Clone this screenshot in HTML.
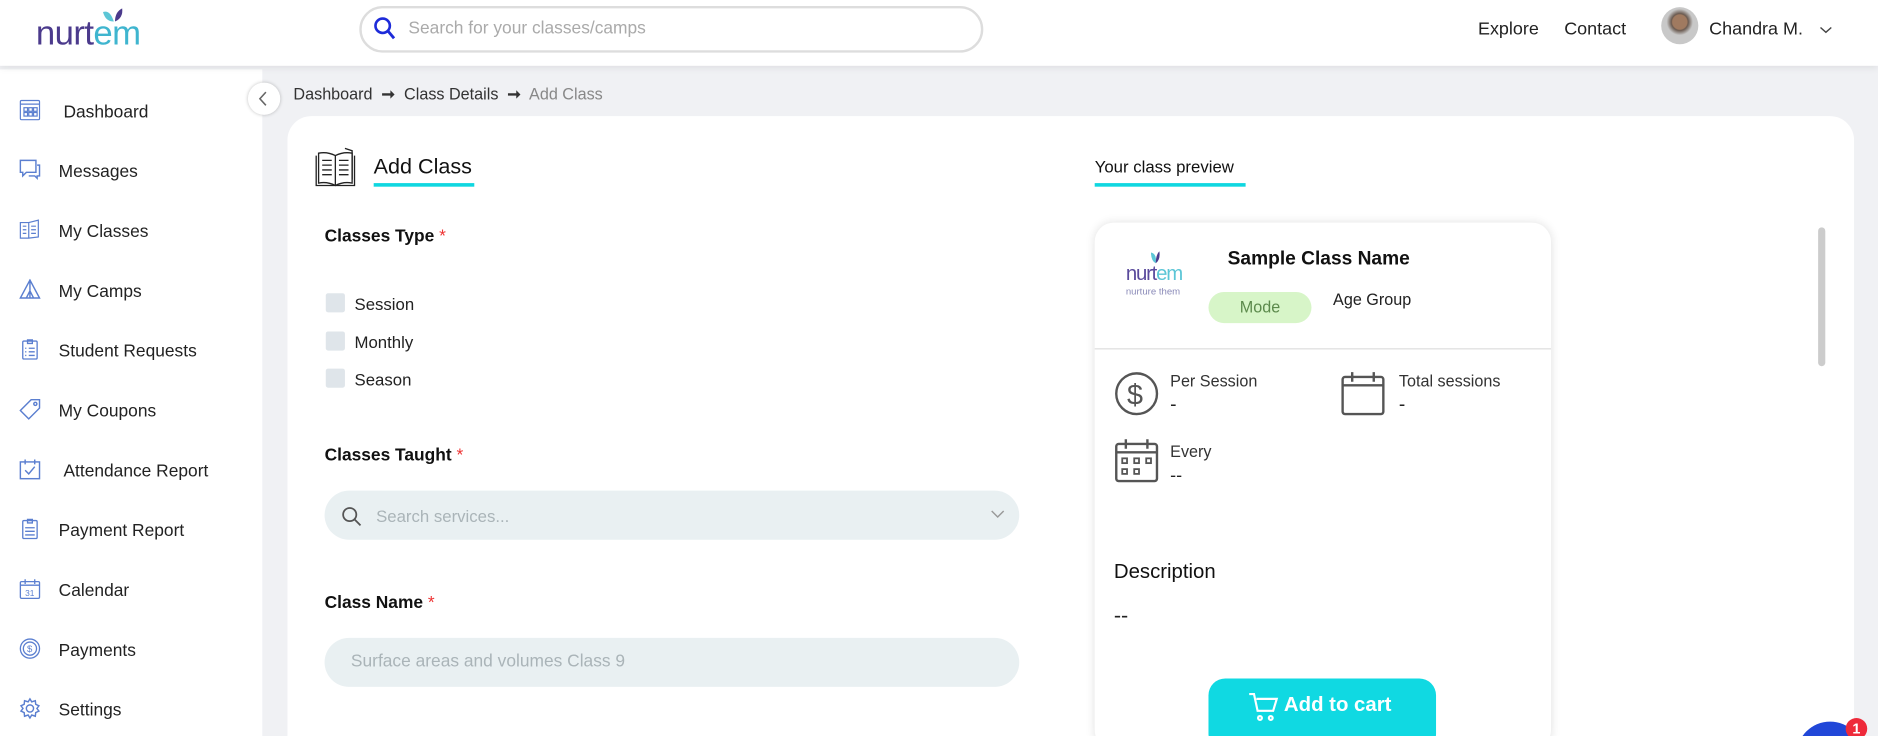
<!DOCTYPE html>
<html><head><meta charset="utf-8"><style>
*{box-sizing:border-box;margin:0;padding:0}
html,body{width:1878px;height:736px;overflow:hidden;background:#f0f1f4}
#w{position:absolute;left:0;top:0;width:1568px;height:615px;transform:scale(1.1977,1.1967);transform-origin:0 0;font-family:"Liberation Sans",sans-serif;color:#222;background:#f0f1f4;overflow:hidden;white-space:nowrap}
.a{position:absolute}
.hdr{left:0;top:0;width:1568px;height:55px;background:#fff;box-shadow:0 2px 6px rgba(0,0,0,.08);z-index:2}
.side{left:0;top:58px;width:219px;height:560px;background:#fff}
.mi{position:absolute;left:0;width:219px;height:30px;font-size:14.5px;color:#222}
.mi svg{position:absolute;left:16px;top:-3px}
.mi span{position:absolute;left:49px;top:0;white-space:nowrap}
.card{left:240px;top:97px;width:1308px;height:540px;background:#fff;border-radius:20px}
.lbl{font-weight:bold;font-size:14.5px;color:#111}
.lbl i{color:#e33;font-style:normal;font-weight:normal}
.cb{width:16px;height:16px;background:#dfe5ea;border-radius:2px}
.inp{background:#e9f0f2;border-radius:21px;height:41px;width:580px;color:#aab4b8;font-size:14px}
.pc{left:914px;top:186px;width:381px;height:440px;background:#fff;border-radius:16px;box-shadow:0 0 8px rgba(0,0,0,.12)}
</style></head><body><div id="w">
<div class="a hdr">
 <div class="a" style="left:30px;top:12px;font-size:29px;letter-spacing:-0.5px;color:#4b3a8c;font-weight:300">nurt<span style="color:#3fb5cf">em</span></div>
 <svg class="a" style="left:84px;top:6px" width="22" height="16" viewBox="0 0 22 16"><path d="M2 4 Q8 2 11 12 Q4 12 2 4Z" fill="#5cc6d6"/><path d="M12 12 Q12 4 18 1 Q19 9 12 12Z" fill="#4b3a8c"/></svg>
 <div class="a" style="left:300px;top:5px;width:521px;height:39px;border:2px solid #ddd;border-radius:20px"></div>
 <svg class="a" style="left:312px;top:14px" width="18" height="20" viewBox="0 0 18 20"><circle cx="7.5" cy="7.5" r="6" fill="none" stroke="#1d2bd9" stroke-width="2.2"/><path d="M12 12l5 6" stroke="#1d2bd9" stroke-width="2.4"/></svg>
 <div class="a" style="left:341px;top:16px;font-size:14.5px;color:#aaa">Search for your classes/camps</div>
 <div class="a" style="left:1234px;top:16px;font-size:15px">Explore</div>
 <div class="a" style="left:1306px;top:16px;font-size:15px">Contact</div>
 <div class="a" style="left:1387px;top:6px;width:31px;height:31px;border-radius:50%;background:radial-gradient(circle at 50% 40%,#a07a60 0 6px,#6a5a50 7px,#c8c8c8 11px);"></div>
 <div class="a" style="left:1427px;top:16px;font-size:15px">Chandra M.</div>
 <svg class="a" style="left:1519px;top:21px" width="11" height="8" viewBox="0 0 11 8"><path d="M1 2l4.5 4 4.5-4" fill="none" stroke="#444" stroke-width="1.2"/></svg>
</div>
<div class="a side">
 <div class="mi" style="top:28px"><svg width="18" height="18" viewBox="0 0 18 18" fill="none" stroke="#5b7fd0" stroke-width="1"><rect x="1" y="1" width="16" height="16" rx="1"/><path d="M1 4h16"/><rect x="4" y="7" width="3" height="3"/><rect x="8" y="7" width="3" height="3"/><rect x="12" y="7" width="3" height="3"/><rect x="4" y="11" width="3" height="3"/><rect x="8" y="11" width="3" height="3"/><rect x="12" y="11" width="3" height="3"/></svg><span style="left:53px">Dashboard</span></div>
 <div class="mi" style="top:78px"><svg width="18" height="18" viewBox="0 0 18 18" fill="none" stroke="#5b7fd0" stroke-width="1.2"><path d="M1 1h13v10H6l-3 3v-3H1z"/><path d="M15 5h2v9h-2v2l-2-2H8"/></svg><span>Messages</span></div>
 <div class="mi" style="top:128px"><svg width="18" height="18" viewBox="0 0 18 18" fill="none" stroke="#5b7fd0" stroke-width="1"><path d="M1 3h7v13H1zM8 3l8-2v14l-8 1"/><path d="M3 6h3M3 9h3M3 12h3M10 6h4M10 9h4M10 12h4"/></svg><span>My Classes</span></div>
 <div class="mi" style="top:178px"><svg width="18" height="18" viewBox="0 0 18 18" fill="none" stroke="#5b7fd0" stroke-width="1.2"><path d="M9 1L1 16h16zM9 1v15M6 16l3-6 3 6"/></svg><span>My Camps</span></div>
 <div class="mi" style="top:228px"><svg width="18" height="18" viewBox="0 0 18 18" fill="none" stroke="#5b7fd0" stroke-width="1.1"><rect x="3" y="2" width="12" height="15" rx="1"/><path d="M7 1h4v3H7zM5 8h1M8 8h5M5 11h1M8 11h5M5 14h1M8 14h5"/></svg><span>Student Requests</span></div>
 <div class="mi" style="top:278px"><svg width="18" height="18" viewBox="0 0 18 18" fill="none" stroke="#5b7fd0" stroke-width="1.2"><path d="M10 1h7v7l-9 9-7-7z"/><circle cx="13.5" cy="4.5" r="1.3"/></svg><span>My Coupons</span></div>
 <div class="mi" style="top:328px"><svg width="18" height="18" viewBox="0 0 18 18" fill="none" stroke="#5b7fd0" stroke-width="1.2"><rect x="1" y="3" width="16" height="14"/><path d="M5 1v4M13 1v4M5 10l3 3 5-6"/></svg><span style="left:53px">Attendance Report</span></div>
 <div class="mi" style="top:378px"><svg width="18" height="18" viewBox="0 0 18 18" fill="none" stroke="#5b7fd0" stroke-width="1.1"><rect x="3" y="2" width="12" height="15" rx="1"/><path d="M7 1h4v3H7zM5 8h8M5 11h8M5 14h8"/></svg><span>Payment Report</span></div>
 <div class="mi" style="top:428px"><svg width="18" height="18" viewBox="0 0 18 18" fill="none" stroke="#5b7fd0" stroke-width="1.1"><rect x="1" y="3" width="16" height="14" rx="1"/><path d="M5 1v4M13 1v4M1 6h16"/><text x="5" y="15" font-size="7" fill="#5b7fd0" stroke="none" font-family="Liberation Sans">31</text></svg><span>Calendar</span></div>
 <div class="mi" style="top:478px"><svg width="18" height="18" viewBox="0 0 18 18" fill="none" stroke="#5b7fd0" stroke-width="1.1"><circle cx="9" cy="9" r="8"/><circle cx="9" cy="9" r="5.5"/><text x="6.5" y="12" font-size="8" fill="#5b7fd0" stroke="none" font-family="Liberation Sans">$</text></svg><span>Payments</span></div>
 <div class="mi" style="top:528px"><svg width="18" height="18" viewBox="0 0 18 18" fill="none" stroke="#5b7fd0" stroke-width="1.2"><circle cx="9" cy="9" r="3"/><path d="M9 1l1.5 2.5 3-1 .3 3 2.7 1.3-1.7 2.2 1.7 2.2-2.7 1.3-.3 3-3-1L9 17l-1.5-2.5-3 1-.3-3L1.5 11.2 3.2 9 1.5 6.8l2.7-1.3.3-3 3 1z"/></svg><span>Settings</span></div>
</div>
<div class="a" style="left:207px;top:69px;width:27px;height:27px;border-radius:50%;background:#fff;box-shadow:0 0 3px rgba(0,0,0,.25);z-index:3"><svg width="27" height="27" viewBox="0 0 27 27"><path d="M15 8l-5 5.5 5 5.5" fill="none" stroke="#666" stroke-width="1.3"/></svg></div>
<div class="a" style="left:245px;top:71px;font-size:13.5px;color:#333">Dashboard &nbsp;<b>&#x279E;</b>&nbsp; Class Details &nbsp;<b>&#x279E;</b>&nbsp; <span style="color:#888">Add Class</span></div>
<div class="a card"></div>
<svg class="a" style="left:263px;top:123px" width="34" height="34" viewBox="0 0 34 34" fill="none" stroke="#222" stroke-width="1.1"><path d="M1 7v25h32V7"/><path d="M3 5v25c5-1 10 0 14 2 4-2 9-3 14-2V5c-5-1-10 0-14 2-4-2-9-3-14-2z"/><path d="M17 7v25"/><path d="M6 11h8M6 15h8M6 19h8M6 23h8M20 11h8M20 15h8M20 19h8M20 23h8"/><path d="M25 1l6 2v24"/></svg>
<div class="a" style="left:312px;top:129px;font-size:18px;color:#111">Add Class</div>
<div class="a" style="left:312px;top:153px;width:84px;height:3px;background:#0fd7e0"></div>
<div class="a lbl" style="left:271px;top:190px">Classes Type <i>*</i></div>
<div class="a cb" style="left:272px;top:245px"></div><div class="a" style="left:296px;top:246px;font-size:14px">Session</div>
<div class="a cb" style="left:272px;top:277px"></div><div class="a" style="left:296px;top:278px;font-size:14px">Monthly</div>
<div class="a cb" style="left:272px;top:308px"></div><div class="a" style="left:296px;top:309px;font-size:14px">Season</div>
<div class="a lbl" style="left:271px;top:373px">Classes Taught <i>*</i></div>
<div class="a inp" style="left:271px;top:410px"><svg class="a" style="left:14px;top:13px" width="17" height="17" viewBox="0 0 17 17"><circle cx="7" cy="7" r="5.5" fill="none" stroke="#555" stroke-width="1.5"/><path d="M11 11l5 5" stroke="#555" stroke-width="1.5"/></svg><span class="a" style="left:43px;top:13px">Search services...</span><svg class="a" style="left:556px;top:16px" width="12" height="8" viewBox="0 0 12 8"><path d="M1 1l5 5 5-5" fill="none" stroke="#999" stroke-width="1.2"/></svg></div>
<div class="a lbl" style="left:271px;top:496px">Class Name <i>*</i></div>
<div class="a inp" style="left:271px;top:533px"><span class="a" style="left:22px;top:12px;font-size:14.5px">Surface areas and volumes Class 9</span></div>
<div class="a" style="left:914px;top:131px;font-size:14px;color:#111">Your class preview</div>
<div class="a" style="left:914px;top:153px;width:126px;height:3px;background:#0fd7e0"></div>
<div class="a pc">
 <div class="a" style="left:26px;top:33px;font-size:17px;color:#5a4a9c;letter-spacing:-1px">nurt<span style="color:#5cc6d6">em</span></div>
 <svg class="a" style="left:46px;top:24px" width="10" height="12" viewBox="0 0 10 12"><path d="M1 1Q6 2 5 10Q1 8 1 1Z" fill="#5cc6d6"/><path d="M5 10Q5 3 8 0Q9 7 5 10Z" fill="#4b3a8c"/></svg>
 <div class="a" style="left:26px;top:53px;font-size:8px;color:#8a8ab8">nurture them</div>
 <div class="a" style="left:111px;top:22px;font-size:16px;font-weight:bold;color:#111">Sample Class Name</div>
 <div class="a" style="left:95px;top:58px;width:86px;height:26px;border-radius:13px;background:#d7f5c8;color:#5c8a4c;font-size:13.5px;text-align:center;line-height:26px">Mode</div>
 <div class="a" style="left:199px;top:57px;font-size:13.5px">Age Group</div>
 <div class="a" style="left:0;top:105px;width:381px;height:1px;background:#ddd"></div>
 <svg class="a" style="left:16px;top:124px" width="38" height="38" viewBox="0 0 38 38"><circle cx="19" cy="19" r="17" fill="none" stroke="#555" stroke-width="2"/><text x="11" y="28" font-size="24" fill="#555" font-family="Liberation Sans">$</text></svg>
 <div class="a" style="left:63px;top:125px;font-size:13.5px;color:#333">Per Session</div>
 <div class="a" style="left:63px;top:144px;font-size:16px">-</div>
 <svg class="a" style="left:205px;top:124px" width="38" height="38" viewBox="0 0 38 38" fill="none" stroke="#555" stroke-width="2"><rect x="2" y="5" width="34" height="31" rx="2"/><path d="M2 12h34M10 1v8M28 1v8"/></svg>
 <div class="a" style="left:254px;top:125px;font-size:13.5px;color:#333">Total sessions</div>
 <div class="a" style="left:254px;top:144px;font-size:16px">-</div>
 <svg class="a" style="left:16px;top:180px" width="38" height="38" viewBox="0 0 38 38" fill="none" stroke="#555" stroke-width="2"><rect x="2" y="5" width="34" height="31" rx="2"/><path d="M2 12h34M10 1v8M28 1v8"/><rect x="7" y="17" width="4" height="4" stroke-width="1.5"/><rect x="17" y="17" width="4" height="4" stroke-width="1.5"/><rect x="27" y="17" width="4" height="4" stroke-width="1.5"/><rect x="7" y="26" width="4" height="4" stroke-width="1.5"/><rect x="17" y="26" width="4" height="4" stroke-width="1.5"/></svg>
 <div class="a" style="left:63px;top:184px;font-size:13.5px;color:#333">Every</div>
 <div class="a" style="left:63px;top:203px;font-size:15px">--</div>
 <div class="a" style="left:16px;top:282px;font-size:17px;color:#111">Description</div>
 <div class="a" style="left:16px;top:318px;font-size:18px">--</div>
 <div class="a" style="left:95px;top:381px;width:190px;height:60px;border-radius:14px;background:#10d9e2;color:#fff;font-size:17px;font-weight:bold"><svg class="a" style="left:33px;top:10px" width="26" height="26" viewBox="0 0 26 26" fill="none" stroke="#fff" stroke-width="1.8"><path d="M1 3h4l3 14h13l3-10H7M9 21v1M19 21v1"/><circle cx="10" cy="23" r="1.6"/><circle cx="19" cy="23" r="1.6"/></svg><span class="a" style="left:63px;top:12px">Add to cart</span></div>
</div>
<div class="a" style="left:1518px;top:190px;width:6px;height:116px;border-radius:3px;background:#ccc"></div>
<div class="a" style="left:1500px;top:603px;width:56px;height:56px;border-radius:50%;background:#2147d8"></div>
<div class="a" style="left:1541px;top:600px;width:18px;height:18px;border-radius:50%;background:#ee2a3a;color:#fff;font-size:12px;font-weight:bold;text-align:center;line-height:18px">1</div>
</div></body></html>
